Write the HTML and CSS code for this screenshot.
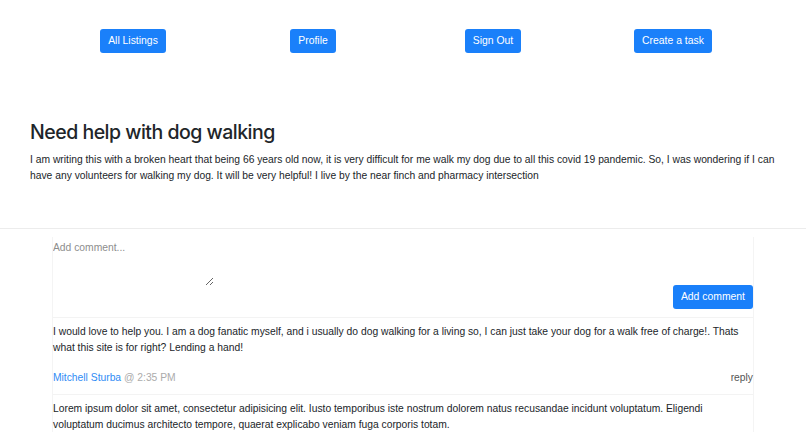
FILE: index.html
```html
<!DOCTYPE html>
<html lang="en">
<head>
    <meta charset="UTF-8">
    <meta name="viewport" content="width=device-width, initial-scale=1.0">
    <title>Need help with dog walking</title>
    <link rel="stylesheet" href="styles.css">
</head>
<body>

<div class="nav">
    <div class="nav-col"><button class="btn">All Listings</button></div>
    <div class="nav-col"><button class="btn">Profile</button></div>
    <div class="nav-col"><button class="btn">Sign Out</button></div>
    <div class="nav-col"><button class="btn">Create a task</button></div>
</div>

<div class="post">
    <h2 class="post-title">Need help with dog walking</h2>
    <p class="post-body">I am writing this with a broken heart that being 66 years old now, it is very difficult for me walk my dog due to all this covid 19 pandemic. So, I was wondering if I can have any volunteers for walking my dog. It will be very helpful! I live by the near finch and pharmacy intersection</p>
</div>

<hr class="divider">

<div class="comments">
    <form class="comment-form">
        <textarea class="comment-input" placeholder="Add comment..."></textarea>
        <div class="form-actions">
            <button type="button" class="btn">Add comment</button>
        </div>
    </form>

    <div class="comment">
        <p class="comment-text">I would love to help you. I am a dog fanatic myself, and i usually do dog walking for a living so, I can just take your dog for a walk free of charge!. Thats what this site is for right? Lending a hand!</p>
        <div class="comment-meta">
            <span><a class="author" href="#">Mitchell Sturba</a> <span class="time">@ 2:35 PM</span></span>
            <span class="reply">reply</span>
        </div>
    </div>

    <div class="comment">
        <p class="comment-text">Lorem ipsum dolor sit amet, consectetur adipisicing elit. Iusto temporibus iste nostrum dolorem natus recusandae incidunt voluptatum. Eligendi voluptatum ducimus architecto tempore, quaerat explicabo veniam fuga corporis totam.</p>
    </div>
</div>

</body>
</html>
```
FILE: styles.css
```css
body {
    font-family: "Liberation Sans", Arial, sans-serif;
    font-size: 10.3px;
    line-height: 16px;
    color: #212529;
    background: white;
    margin: 0;
}
.nav {
    width: 720px;
    margin: 0 auto;
    padding-top: 29px;
    display: grid;
    grid-template-columns: repeat(4, 1fr);
}
.nav-col {
    text-align: center;
}
.btn {
    font-family: inherit;
    font-size: 10.4px;
    line-height: 16px;
    padding: 4px 8px;
    background-color: #1a80fa;
    color: white;
    border: none;
    border-radius: 3px;
    cursor: pointer;
}
.post {
    padding: 0 20px 0 30px;
}
.post-title {
    font-family: Inter, "Liberation Sans", sans-serif;
    font-size: 19.5px;
    font-weight: 500;
    letter-spacing: -0.5px;
    line-height: 24px;
    margin: 67px 0 8px;
}
.post-body {
    margin: 0;
}
.divider {
    border: none;
    border-top: 1px solid #ececec;
    margin: 44px 0 8px;
}
.comments {
    width: 700px;
    margin: 0 auto;
    border-left: 1px solid #f4f4f4;
    border-right: 1px solid #f4f4f4;
}
.comment-form {
    padding-bottom: 8px;
}
.comment-input {
    display: block;
    width: 161px;
    height: 49px;
    box-sizing: border-box;
    border: none;
    padding: 3px 0 0;
    font-family: inherit;
    font-size: 10.3px;
    line-height: 16px;
    color: #212529;
}
.comment-input::placeholder {
    color: #8d8d8d;
}
.form-actions {
    text-align: right;
    margin-top: -1px;
}
.comment {
    border-top: 1px solid #f3f3f3;
    padding: 6px 0 8px;
}
.comment-text {
    margin: 0;
}
.comment-meta {
    display: flex;
    justify-content: space-between;
    margin-top: 14px;
}
.author {
    color: #2f8cf5;
    text-decoration: none;
}
.time {
    color: #ababab;
}
.reply {
    color: #555;
}
```
